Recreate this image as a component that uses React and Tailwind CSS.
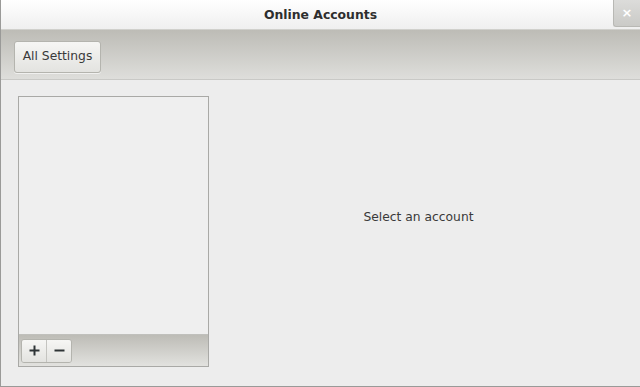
import React from 'react';

const font = { fontFamily: '"DejaVu Sans", "Noto Sans", sans-serif' };

const App = () => {
  return (
    <div
      className="w-[640px] h-[387px] flex flex-col bg-[#ededed] border-l border-b border-[#9a9a98] overflow-hidden text-[#2e3436]"
      style={font}
    >
      {/* Title bar */}
      <div className="h-[30px] shrink-0 relative flex items-center justify-center pt-[2px] bg-gradient-to-b from-[#ffffff] to-[#efefef] border-b border-[#d0d0cc]">
        <span className="text-[12.4px] font-bold text-[#2e2e2e]">Online Accounts</span>
        <div className="absolute right-0 top-0 w-[27px] h-[27px] flex items-center justify-center bg-gradient-to-b from-[#dcdcda] to-[#cacac7] border-l border-b border-[#b8b8b4] rounded-bl-[3px] text-white text-[13px] font-bold">
          ×
        </div>
      </div>

      {/* Header toolbar */}
      <div className="h-[50px] shrink-0 flex items-center pl-[13px] pt-[4px] bg-gradient-to-b from-[#bdbcb6] to-[#dededb] border-b border-[#c9c9c6]">
        <button className="h-[32px] w-[87px] rounded-[3px] border border-[#b4b4ae] bg-gradient-to-b from-[#f6f6f4] to-[#e3e3e0] text-[12.3px] text-[#3a3a3a] shadow-[0_1px_0_rgba(255,255,255,0.6)]">
          All Settings
        </button>
      </div>

      {/* Content */}
      <div className="flex-1 flex pt-[16px] pb-[19px] pl-[17px]">
        <div className="w-[191px] flex flex-col border border-[#a9a9a6] bg-[#efefef]">
          <div className="flex-1" />
          <div className="h-[32px] flex items-center px-[2px] bg-gradient-to-b from-[#bdbcb6] to-[#e2e2df] border-t border-[#c0c0bc]">
            <div className="flex h-[24px] rounded-[3px] border border-[#b4b4ae] overflow-hidden">
              <div className="w-[25px] flex items-center justify-center bg-gradient-to-b from-[#f6f6f4] to-[#e3e3e0] border-r border-[#c4c4c0]">
                <svg width="11" height="11" viewBox="0 0 11 11">
                  <path d="M5.5 0.5v10M0.5 5.5h10" stroke="#2e3436" strokeWidth="2" />
                </svg>
              </div>
              <div className="w-[24px] flex items-center justify-center bg-gradient-to-b from-[#f6f6f4] to-[#e3e3e0]">
                <svg width="11" height="11" viewBox="0 0 11 11">
                  <path d="M0.5 5.5h10" stroke="#2e3436" strokeWidth="2" />
                </svg>
              </div>
            </div>
          </div>
        </div>
        <div className="flex-1 flex items-center justify-center pr-[12px] pb-[28px]">
          <span className="text-[12.3px] text-[#3a3a3a]">Select an account</span>
        </div>
      </div>
    </div>
  );
};

export default App;
